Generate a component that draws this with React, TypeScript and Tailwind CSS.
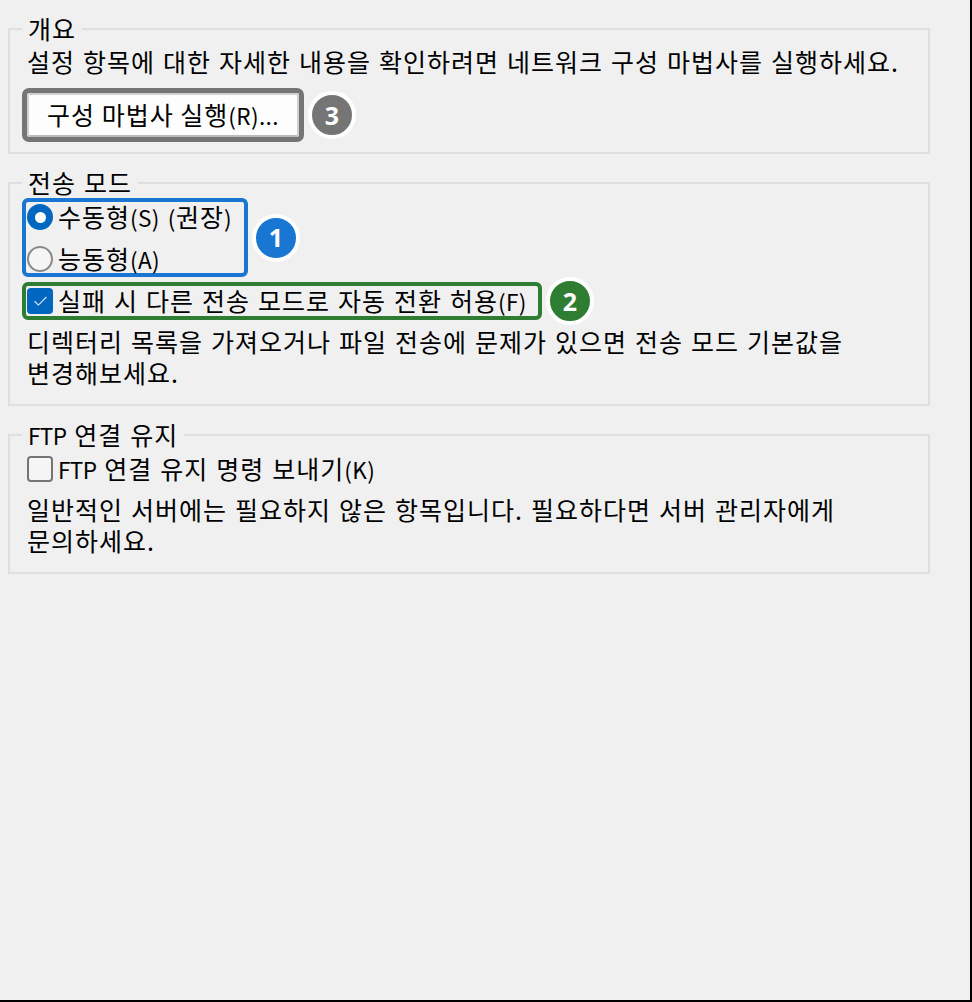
import React from 'react';
import { Check } from 'lucide-react';

// latin runs are set smaller than the hangul, like the dialog font does
const L = ({ children }: { children: React.ReactNode }) => (
  <span className="text-[22.5px] [letter-spacing:0.4px]">{children}</span>
);

const Ftp = () => <span className="text-[22.5px] [letter-spacing:-0.6px]">FTP</span>;

const Group = ({ title, className, children }: { title: React.ReactNode; className: string; children: React.ReactNode }) => (
  <section className={`relative w-[922px] border-2 border-[#dfdfdf] pl-[12px] ${className}`}>
    <h2 className="absolute top-[-16px] left-[12px] bg-[#f0f0f0] px-[6px] text-[25px] leading-[28px] font-normal whitespace-nowrap">{title}</h2>
    {children}
  </section>
);

const Badge = ({ n, className }: { n: number; className: string }) => (
  <span className={`-my-[6px] flex h-[48px] w-[48px] shrink-0 items-center justify-center rounded-full border-[4px] border-white text-[25px] leading-none font-bold tracking-normal text-white [font-family:'Open_Sans',sans-serif] ${className}`}>
    {n}
  </span>
);

export default function App() {
  return (
    <div className="flex h-[1002px] w-[972px] flex-col gap-[28px] border-r-2 border-b-2 border-black bg-[#f0f0f0] pt-[28px] pl-[8px] text-[25px] text-black [letter-spacing:1px] [word-spacing:1.4px] [font-family:'Noto_Sans_CJK_KR','Noto_Sans',sans-serif]">
      <Group title="개요" className="h-[126px] pt-[15px]">
        <p className="pl-[5px] leading-[32px] whitespace-nowrap">설정 항목에 대한 자세한 내용을 확인하려면 네트워크 구성 마법사를 실행하세요.</p>
        <div className="mt-[11px] flex items-center gap-[4px]">
          <div className="w-[282px] rounded-[7px] border-[5px] border-[#757575]">
            <button className="flex h-[44px] w-full items-center justify-center rounded-[3px] border-2 border-[#d0d0d0] border-b-[#bcbcbc] bg-[#fdfdfd] pb-[2px] leading-none">
              <span>구성 마법사 실행<L>(R)...</L></span>
            </button>
          </div>
          <Badge n={3} className="bg-[#757575]" />
        </div>
      </Group>

      <Group title="전송 모드" className="h-[224px] pt-[14px]">
        <div className="flex items-center gap-[4px]">
          <div className="flex h-[79px] w-[226px] flex-col gap-[12px] rounded-[6px] border-[4px] border-[#1976d2] pl-[1px]">
            <label className="flex h-[30px] shrink-0 items-center gap-[5px] whitespace-nowrap">
              <span className="flex h-[26px] w-[26px] shrink-0 items-center justify-center rounded-full bg-[#0067c0]">
                <span className="h-[11px] w-[11px] rounded-full bg-white" />
              </span>
              <span>수동형<L>(S)</L> <L>(</L>권장<L>)</L></span>
            </label>
            <label className="flex h-[30px] shrink-0 items-center gap-[5px] whitespace-nowrap">
              <span className="h-[26px] w-[26px] shrink-0 rounded-full border-2 border-[#8a8a8a] bg-[#f5f5f5]" />
              <span>능동형<L>(A)</L></span>
            </label>
          </div>
          <Badge n={1} className="bg-[#1976d2]" />
        </div>

        <div className="mt-[5px] flex items-center gap-[4px]">
          <div className="w-[520px] rounded-[6px] border-[4px] border-[#2e7d32] pl-[1px]">
            <label className="flex h-[30px] items-center gap-[5px] whitespace-nowrap">
              <span className="flex h-[26px] w-[26px] shrink-0 items-center justify-center rounded-[4px] bg-[#0067c0]">
                <Check size={17} strokeWidth={1.5} className="text-[#dce9f5]" />
              </span>
              <span>실패 시 다른 전송 모드로 자동 전환 허용<L>(F)</L></span>
            </label>
          </div>
          <Badge n={2} className="bg-[#2e7d32]" />
        </div>

        <p className="mt-[6px] w-[860px] pl-[5px] leading-[31px] break-keep">디렉터리 목록을 가져오거나 파일 전송에 문제가 있으면 전송 모드 기본값을 변경해보세요.</p>
      </Group>

      <Group title={<><Ftp /> 연결 유지</>} className="h-[140px] pt-[18px]">
        <label className="flex h-[30px] items-center gap-[5px] pl-[5px] whitespace-nowrap">
          <span className="h-[26px] w-[26px] shrink-0 rounded-[4px] border-2 border-[#757575] bg-[#f5f5f5]" />
          <span><Ftp /> 연결 유지 명령 보내기<L>(K)</L></span>
        </label>
        <p className="mt-[10px] w-[860px] pl-[5px] leading-[31px] break-keep">일반적인 서버에는 필요하지 않은 항목입니다. 필요하다면 서버 관리자에게 문의하세요.</p>
      </Group>
    </div>
  );
}
